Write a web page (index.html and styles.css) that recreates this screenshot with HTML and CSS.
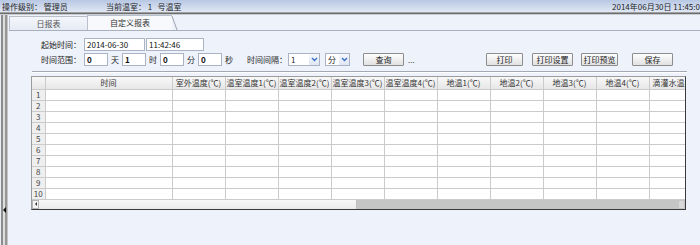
FILE: index.html
```html
<!DOCTYPE html>
<html lang="zh-CN">
<head>
    <meta charset="UTF-8">
    <title>自定义报表</title>
    <link rel="stylesheet" href="styles.css">
</head>
<body>

    <!-- Top status bar -->
    <div class="topbar">
        <span class="who">操作级别： 管理员</span>
        <span class="room">当前温室：&nbsp;1&nbsp;&nbsp;&nbsp;号温室</span>
        <span class="clock">2014年06月30日 11:45:08</span>
    </div>
    <div class="topline"></div>

    <div class="main">
        <!-- Left splitter -->
        <div class="splitter"><span class="arrow"></span></div>

        <div class="panel">
            <!-- Tabs -->
            <div class="tabs">
                <div class="tab">日报表</div>
                <div class="tab active">自定义报表</div>
            </div>

            <div class="content">
                <div class="row">
                    <span class="lbl">起始时间：</span>
                    <input class="txt date" type="text" value="2014-06-30">
                    <input class="txt time" type="text" value="11:42:46">
                </div>

                <div class="row row-range">
                    <span class="lbl">时间范围：</span>
                    <input class="txt num" type="text" value="0">
                    <span class="unit">天</span>
                    <input class="txt num" type="text" value="1">
                    <span class="unit">时</span>
                    <input class="txt num" type="text" value="0">
                    <span class="unit">分</span>
                    <input class="txt num" type="text" value="0">
                    <span class="unit">秒</span>

                    <span class="lbl-gap">时间间隔：</span>
                    <div class="sel sel-num">
                        <span class="sel-val">1</span>
                        <span class="sel-btn"><svg width="7" height="5" viewBox="0 0 7 5"><path d="M1 1 L3.5 3.5 L6 1" fill="none" stroke="#3b6fc4" stroke-width="1.4"/></svg></span>
                    </div>
                    <div class="sel sel-unit">
                        <span class="sel-val">分</span>
                        <span class="sel-btn"><svg width="7" height="5" viewBox="0 0 7 5"><path d="M1 1 L3.5 3.5 L6 1" fill="none" stroke="#3b6fc4" stroke-width="1.4"/></svg></span>
                    </div>
                    <button class="btn btn-query">查询</button>
                    <span class="dots">...</span>

                    <div class="actions">
                        <button class="btn btn-print">打印</button>
                        <button class="btn btn-setup">打印设置</button>
                        <button class="btn btn-preview">打印预览</button>
                        <button class="btn btn-save">保存</button>
                    </div>
                </div>

                <div class="sep"></div>

                <!-- Report grid -->
                <div class="grid">
                    <div class="grid-view">
                        <table>
                            <colgroup>
                                <col class="c-rn">
                                <col class="c-time">
                                <col class="c-val"><col class="c-val"><col class="c-val"><col class="c-val"><col class="c-val">
                                <col class="c-val"><col class="c-val"><col class="c-val"><col class="c-val"><col class="c-val">
                            </colgroup>
                            <thead>
                                <tr>
                                    <th class="rn"></th>
                                    <th>时间</th>
                                    <th>室外温度(℃)</th>
                                    <th>温室温度1(℃)</th>
                                    <th>温室温度2(℃)</th>
                                    <th>温室温度3(℃)</th>
                                    <th>温室温度4(℃)</th>
                                    <th>地温1(℃)</th>
                                    <th>地温2(℃)</th>
                                    <th>地温3(℃)</th>
                                    <th>地温4(℃)</th>
                                    <th class="last">滴灌水温(℃)</th>
                                </tr>
                            </thead>
                            <tbody id="rows"></tbody>
                        </table>
                    </div>
                    <div class="hscroll">
                        <span class="sb-btn"><span class="sb-left"></span></span>
                        <span class="sb-thumb"></span>
                        <span class="sb-track"></span>
                        <span class="sb-btn sb-end"></span>
                    </div>
                </div>
            </div>
        </div>
    </div>

    <script>
        // build the 10 empty report rows
        const body = document.getElementById('rows');
        for (let i = 1; i <= 10; i++) {
            let html = '<td class="rn">' + i + '</td>';
            for (let c = 0; c < 11; c++) {
                html += '<td></td>';
            }
            const tr = document.createElement('tr');
            tr.innerHTML = html;
            body.appendChild(tr);
        }
    </script>
</body>
</html>
```

FILE: styles.css
```css
/* General Page Styles */
* {
    box-sizing: border-box;
}

body {
    margin: 0;
    width: 700px;
    height: 245px;
    overflow: hidden;
    display: flex;
    flex-direction: column;
    background-color: #eef2fa;
    font-family: "Noto Sans CJK SC", "Noto Sans", sans-serif;
    font-size: 8px;
    color: #1e1e1e;
}

/* Top status bar */
.topbar {
    height: 12px;
    display: flex;
    align-items: center;
    padding-left: 2px;
    white-space: nowrap;
    background: linear-gradient(#b8c8e4, #e0e7f4);
}

.who {
    width: 104px;
}

.room {
    flex: 1;
}

.clock {
    width: 88px;
    overflow: hidden;
}

.topline {
    height: 3px;
    background: linear-gradient(#a0a0a0 0 1px, #6e6e6e 1px 2px, #c8ccd4 2px);
}

.main {
    flex: 1;
    display: flex;
    min-height: 0;
}

/* Left splitter bar */
.splitter {
    width: 9px;
    display: flex;
    flex-direction: column;
    background: linear-gradient(to right, #e9edf5 0 1px, #8c8c8c 1px 3px, #dedede 3px 5px, #969696 5px 7px, #c4c4c4 7px 8px, #eef2fa 8px);
}

.arrow {
    margin-top: auto;
    margin-bottom: 32px;
    margin-left: 3px;
    width: 0;
    height: 0;
    border-right: 3px solid #111;
    border-top: 3px solid transparent;
    border-bottom: 3px solid transparent;
}

.panel {
    flex: 1;
    display: flex;
    flex-direction: column;
}

/* Tabs */
.tabs {
    height: 16px;
    display: flex;
    align-items: flex-end;
    border-bottom: 1px solid #a9b0bd;
}

.tab {
    height: 14px;
    width: 78px;
    display: flex;
    align-items: center;
    justify-content: center;
    color: #555;
    border-top: 1px solid #b9c0cc;
    border-left: 1px solid #b9c0cc;
    background: linear-gradient(#f4f6fb, #e6ebf4);
}

.tab.active {
    position: relative;
    height: 15px;
    width: 85px;
    padding-bottom: 2px;
    color: #333;
    background: #f8f9fc;
}

.tab.active::after {
    content: "";
    position: absolute;
    top: 0;
    bottom: 0;
    right: -3px;
    width: 1px;
    background-color: #9aa2b0;
    transform: skewX(20deg);
}

/* Form area */
.content {
    padding: 7px 14px 0 22px;
}

.row {
    height: 13px;
    display: flex;
    align-items: center;
}

.row-range {
    margin-top: 2px;
}

.lbl {
    width: 53px;
    padding-right: 3px;
    text-align: right;
    color: #222;
}

.txt {
    height: 13px;
    padding: 0 2px;
    border: 1px solid #aab3c3;
    background-color: white;
    font-family: inherit;
    font-size: 8px;
    color: #111;
    outline: none;
}

.date {
    width: 61px;
}

.time {
    width: 58px;
    margin-left: 1px;
}

.num {
    width: 24px;
    font-weight: bold;
}

.unit {
    width: 14px;
    text-align: center;
}

.lbl-gap {
    margin-left: 11px;
    width: 41px;
}

.sel {
    height: 13px;
    display: flex;
    align-items: center;
    border: 1px solid #aab3c3;
    background-color: white;
}

.sel-num {
    width: 32px;
}

.sel-unit {
    width: 25px;
    margin-left: 5px;
}

.sel-val {
    flex: 1;
    padding-left: 2px;
}

.sel-btn {
    width: 10px;
    height: 11px;
    display: flex;
    align-items: center;
    justify-content: center;
    background: linear-gradient(#f6f8fd, #dfe6f3);
}

/* Buttons */
.btn {
    height: 13px;
    padding: 0;
    border: 1px solid #8d8d8d;
    border-radius: 1px;
    background: linear-gradient(#fefefe, #e1e1e1);
    font-family: inherit;
    font-size: 8px;
    color: #222;
}

.btn-query {
    width: 41px;
    margin-left: 13px;
}

.dots {
    margin-left: 4px;
    color: #444;
}

.actions {
    margin-left: auto;
    margin-right: 13px;
    display: flex;
}

.btn-print {
    width: 37px;
}

.btn-setup {
    width: 41px;
    margin-left: 9px;
}

.btn-preview {
    width: 37px;
    margin-left: 8px;
}

.btn-save {
    width: 41px;
    margin-left: 14px;
}

.sep {
    height: 2px;
    margin: 5px -1px 0 1px;
    border-top: 1px solid #a3a8b2;
    border-bottom: 1px solid #ffffff;
}

/* Report grid */
.grid {
    width: 655px;
    margin-top: 3px;
    border: 1px solid;
    border-color: #9c9c9c #3a3a3a #3a3a3a #9c9c9c;
    background-color: white;
}

.grid-view {
    overflow: hidden;
}

table {
    width: 670px;
    table-layout: fixed;
    border-collapse: collapse;
}

.c-rn {
    width: 13px;
}

.c-time {
    width: 127px;
}

.c-val {
    width: 53px;
}

th, td {
    height: 11px;
    padding: 0;
    border: 1px solid #cbcbcb;
    text-align: center;
    white-space: nowrap;
    overflow: hidden;
    font-weight: normal;
    line-height: 9px;
}

th {
    height: 12px;
    border-top: none;
    color: #333;
    background: linear-gradient(#f8f8f8, #e6e6e6);
}

th:first-child, td:first-child {
    border-left: none;
}

.last {
    text-align: left;
    padding-left: 3px;
}

td.rn, th.rn {
    background-color: #efefef;
    color: #444;
}

/* Horizontal scrollbar */
.hscroll {
    height: 9px;
    display: flex;
}

.sb-btn {
    width: 7px;
    display: flex;
    align-items: center;
    justify-content: center;
    background-color: #f3f3f3;
    border: 1px solid #b4b4b4;
}

.sb-left {
    width: 0;
    height: 0;
    border-right: 2px solid #333;
    border-top: 2px solid transparent;
    border-bottom: 2px solid transparent;
}

.sb-thumb {
    width: 318px;
    background: linear-gradient(#f7f7f7, #ebebeb);
    border-right: 1px solid #c0c0c0;
}

.sb-track {
    flex: 1;
    background-color: #c5c5c5;
}

.sb-end {
    background-color: #d8d8d8;
    border-color: #c5c5c5;
}
```
